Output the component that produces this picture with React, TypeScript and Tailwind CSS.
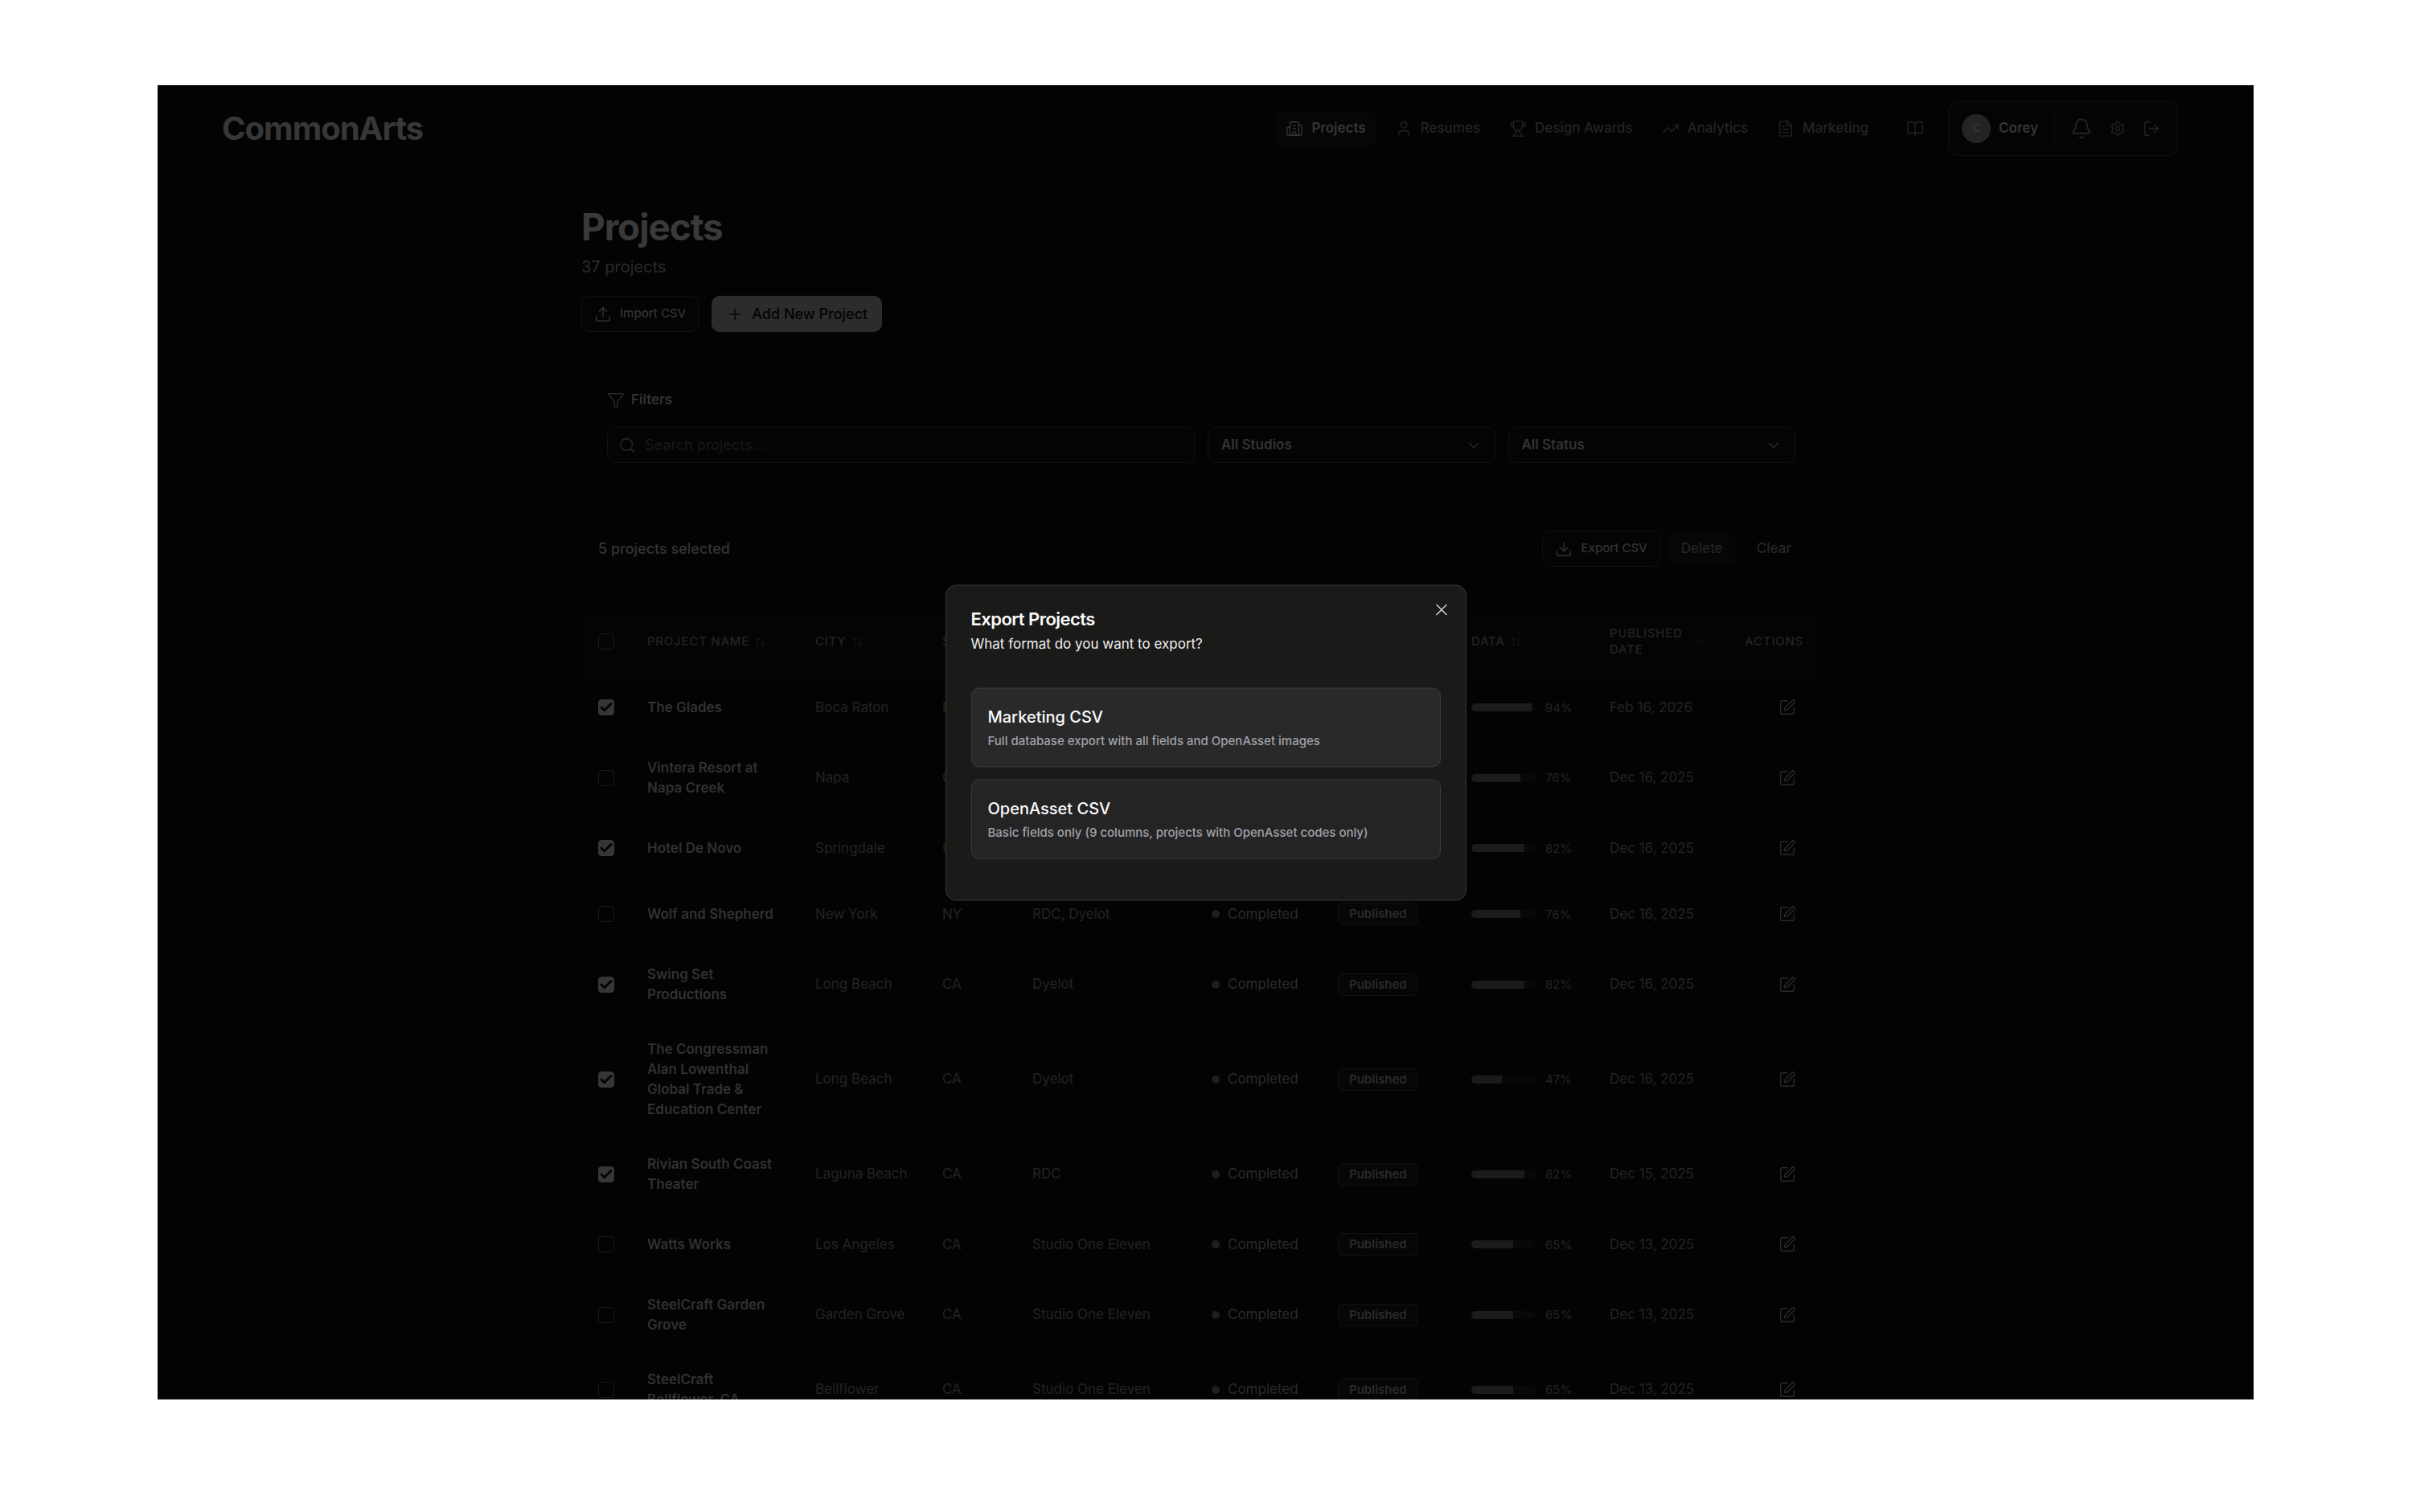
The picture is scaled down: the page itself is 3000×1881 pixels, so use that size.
import React, { useState } from "react";
import {
  ArrowUpDown,
  Bell,
  BookOpen,
  Building2,
  Check,
  ChevronDown,
  Download,
  FileText,
  Filter,
  LogOut,
  Plus,
  Search,
  Settings,
  SquarePen,
  TrendingUp,
  Trophy,
  Upload,
  User,
  X,
} from "lucide-react";

type Project = {
  name: string;
  city: string;
  state: string;
  studio: string;
  data: number;
  published: string;
  selected: boolean;
};

const initialProjects: Project[] = [
  { name: "The Glades", city: "Boca Raton", state: "FL", studio: "RDC", data: 94, published: "Feb 16, 2026", selected: true },
  { name: "Vintera Resort at Napa Creek", city: "Napa", state: "CA", studio: "RDC", data: 76, published: "Dec 16, 2025", selected: false },
  { name: "Hotel De Novo", city: "Springdale", state: "UT", studio: "RDC", data: 82, published: "Dec 16, 2025", selected: true },
  { name: "Wolf and Shepherd", city: "New York", state: "NY", studio: "RDC, Dyelot", data: 76, published: "Dec 16, 2025", selected: false },
  { name: "Swing Set Productions", city: "Long Beach", state: "CA", studio: "Dyelot", data: 82, published: "Dec 16, 2025", selected: true },
  { name: "The Congressman Alan Lowenthal Global Trade & Education Center", city: "Long Beach", state: "CA", studio: "Dyelot", data: 47, published: "Dec 16, 2025", selected: true },
  { name: "Rivian South Coast Theater", city: "Laguna Beach", state: "CA", studio: "RDC", data: 82, published: "Dec 15, 2025", selected: true },
  { name: "Watts Works", city: "Los Angeles", state: "CA", studio: "Studio One Eleven", data: 65, published: "Dec 13, 2025", selected: false },
  { name: "SteelCraft Garden Grove", city: "Garden Grove", state: "CA", studio: "Studio One Eleven", data: 65, published: "Dec 13, 2025", selected: false },
  { name: "SteelCraft Bellflower, CA", city: "Bellflower", state: "CA", studio: "Studio One Eleven", data: 65, published: "Dec 13, 2025", selected: false },
];

const navItems = [
  { label: "Projects", icon: Building2, active: true },
  { label: "Resumes", icon: User, active: false },
  { label: "Design Awards", icon: Trophy, active: false },
  { label: "Analytics", icon: TrendingUp, active: false },
  { label: "Marketing", icon: FileText, active: false },
];

const columns = ["Project Name", "City", "State", "Studio", "Status", "Publish", "Data"];

function Header() {
  return (
    <header className="flex items-center justify-between py-5 pr-[83px] pl-20">
      <a href="#" className="text-[40px] leading-[48px] font-bold tracking-tight text-[#373737]">
        CommonArts
      </a>
      <div className="flex items-center">
        <nav className="flex items-center gap-[10px]">
          {navItems.map(({ label, icon: Icon, active }) => (
            <a
              key={label}
              href="#"
              className={
                active
                  ? "flex h-[43px] items-center gap-[10px] rounded-lg bg-[#060606] px-[13px] font-semibold text-[#363636]"
                  : "flex h-[43px] items-center gap-[10px] rounded-lg px-[13px] font-medium text-[#242425]"
              }
            >
              <Icon size={22} strokeWidth={1.5} />
              {label}
            </a>
          ))}
          <a href="#" aria-label="Library" className="flex h-[43px] items-center px-6 text-[#242425]">
            <BookOpen size={22} strokeWidth={1.5} />
          </a>
        </nav>
        <div className="ml-[6px] flex h-[68px] items-center rounded-xl border border-[#0f0f0f] bg-[#040404] pr-[21px] pl-4">
          <div className="flex h-[46px] items-center gap-[10px] border-r border-[#0e0e0e] pr-5">
            <span className="flex size-9 items-center justify-center rounded-full bg-[#242424] text-[13px] font-medium text-[#3a3a3a]">
              C
            </span>
            <span className="font-semibold text-[#363636]">Corey</span>
          </div>
          <div className="flex items-center gap-[21px] pl-[19px] text-[#262627]">
            <button type="button" aria-label="Notifications">
              <Bell size={28} strokeWidth={1.5} />
            </button>
            <button type="button" aria-label="Settings">
              <Settings size={20} strokeWidth={1.5} />
            </button>
            <button type="button" aria-label="Log out">
              <LogOut size={22} strokeWidth={1.5} />
            </button>
          </div>
        </div>
      </div>
    </header>
  );
}

function Checkbox({ label, checked, onChange }: { label: string; checked: boolean; onChange: () => void }) {
  return (
    <span className="relative flex size-5">
      <input
        type="checkbox"
        aria-label={label}
        checked={checked}
        onChange={onChange}
        className="size-5 appearance-none rounded-[4px] border border-[#1a1a1a] checked:border-[#363636] checked:bg-[#363636]"
      />
      {checked && <Check size={18} strokeWidth={4} className="pointer-events-none absolute top-px left-px text-[#030303]" />}
    </span>
  );
}

function FilterSelect({ label }: { label: string }) {
  return (
    <div className="relative">
      <select
        aria-label={label}
        className="h-[45px] w-full appearance-none rounded-[10px] border border-[#111111] bg-[#040404] px-4 font-semibold text-[#333333]"
      >
        <option>{label}</option>
      </select>
      <ChevronDown size={22} strokeWidth={1.5} className="pointer-events-none absolute top-3 right-4 text-[#2a2a2b]" />
    </div>
  );
}

function Filters() {
  return (
    <section className="mt-[72px] px-8">
      <h2 className="flex items-center gap-2 leading-[25px] font-semibold text-[#333333]">
        <Filter size={22} strokeWidth={1.5} className="text-[#2a2a2b]" />
        Filters
      </h2>
      <div className="mt-[21px] grid grid-cols-4 gap-4">
        <div className="relative col-span-2">
          <Search size={22} strokeWidth={1.5} className="absolute top-3 left-[14px] text-[#2a2a2b]" />
          <input
            type="text"
            aria-label="Search projects"
            placeholder="Search projects..."
            className="h-[45px] w-full rounded-[10px] border border-[#111111] bg-[#040404] pl-[46px] text-[18px] placeholder:text-[#19191a]"
          />
        </div>
        <FilterSelect label="All Studios" />
        <FilterSelect label="All Status" />
      </div>
    </section>
  );
}

function ProjectsTable({ projects, onToggle }: { projects: Project[]; onToggle: (index: number) => void }) {
  return (
    <table className="mt-[59px] w-full table-fixed text-left">
      <colgroup>
        <col className="w-[62px]" />
        <col className="w-[209px]" />
        <col className="w-[158px]" />
        <col className="w-[112px]" />
        <col className="w-[223px]" />
        <col className="w-[157px]" />
        <col className="w-[166px]" />
        <col className="w-[172px]" />
        <col className="w-[168px]" />
        <col />
      </colgroup>
      <thead>
        <tr className="h-[75px] text-[15px] leading-5 text-[#232324] uppercase">
          <th className="rounded-tl-xl border-b border-[#090909] bg-[#040404] pb-[6px] pl-[21px]">
            <Checkbox label="Select all projects" checked={false} onChange={() => {}} />
          </th>
          {columns.map((column) => (
            <th key={column} className="border-b border-[#090909] bg-[#040404] px-5 pb-[6px] font-medium tracking-wider">
              <button type="button" className="flex items-center gap-[6px] uppercase">
                {column}
                <ArrowUpDown size={15} strokeWidth={1.5} className="text-[#1a1a1b]" />
              </button>
            </th>
          ))}
          <th className="border-b border-[#090909] bg-[#040404] px-5 pb-[6px] font-medium tracking-wider">
            <button type="button" className="flex items-center gap-4 text-left uppercase">
              <span>
                Published
                <br />
                Date
              </span>
              <ArrowUpDown size={11} strokeWidth={1.5} className="text-[#141415]" />
            </button>
          </th>
          <th className="rounded-tr-xl border-b border-[#090909] bg-[#040404] pr-[22px] pb-[6px] text-right font-medium tracking-wider">
            Actions
          </th>
        </tr>
      </thead>
      <tbody>
        {projects.map((project, index) => (
          <tr key={project.name} className="border-b border-[#040404] leading-[25px] text-[#232324]">
            <td className="pl-[21px]">
              <Checkbox label={`Select ${project.name}`} checked={project.selected} onChange={() => onToggle(index)} />
            </td>
            <td className="px-5 py-[21px] font-semibold text-[#313131]">{project.name}</td>
            <td className="px-5">{project.city}</td>
            <td className="px-5">{project.state}</td>
            <td className="px-5">{project.studio}</td>
            <td className="px-5 text-[#2a2a2b]">
              <span className="flex items-center gap-[10px]">
                <span className="size-[10px] rounded-full bg-[#1e1e1e]" />
                Completed
              </span>
            </td>
            <td className="px-5">
              <span className="inline-block rounded-md border border-[#111111] bg-[#060606] px-[13px] align-middle text-[15px] leading-[26px] font-semibold text-[#2a2a2b]">
                Published
              </span>
            </td>
            <td className="px-5">
              <div className="flex items-center gap-3">
                <div className="h-[10px] w-20 overflow-hidden rounded-full bg-[#080808]">
                  <div className="h-full bg-[#1b1b1a]" style={{ width: `${project.data}%` }} />
                </div>
                <span className="text-[15px]">{project.data}%</span>
              </div>
            </td>
            <td className="px-5">{project.published}</td>
            <td className="pr-[22px]">
              <button
                type="button"
                aria-label={`Edit ${project.name}`}
                className="my-[21px] ml-auto flex h-[39px] w-10 items-center justify-center text-[#2a2a2b]"
              >
                <SquarePen size={22} strokeWidth={1.5} />
              </button>
            </td>
          </tr>
        ))}
      </tbody>
    </table>
  );
}

function ExportDialog() {
  return (
    <div
      role="dialog"
      aria-labelledby="export-title"
      className="absolute top-1/2 left-1/2 w-[648px] -translate-x-1/2 -translate-y-1/2 rounded-[13px] border border-[#383837] bg-[#1a1a18] px-[31px] pt-[27px] pb-[51px] text-[#fafafa]"
    >
      <button type="button" aria-label="Close" className="absolute top-[18px] right-[18px] text-[#d4d4d8]">
        <X size={24} strokeWidth={1.5} />
      </button>
      <h2 id="export-title" className="text-[22px] leading-[28px] font-semibold tracking-tight">
        Export Projects
      </h2>
      <p className="mt-[5px] leading-[25px] text-[#f0f0f1]">What format do you want to export?</p>
      <div className="mt-[42px] flex flex-col gap-[15px]">
        <button type="button" className="rounded-[10px] border border-[#3c3c3c] bg-[#292929] px-5 pt-5 pb-[22px] text-left">
          <span className="block text-[20px] leading-[30px] font-medium">Marketing CSV</span>
          <span className="mt-1 block text-[15px] leading-[21px] font-medium text-[#a1a1aa]">
            Full database export with all fields and OpenAsset images
          </span>
        </button>
        <button type="button" className="rounded-[10px] border border-[#3c3c3c] bg-[#242424] px-5 pt-5 pb-[22px] text-left">
          <span className="block text-[20px] leading-[30px] font-medium">OpenAsset CSV</span>
          <span className="mt-1 block text-[15px] leading-[21px] font-medium text-[#a1a1aa]">
            Basic fields only (9 columns, projects with OpenAsset codes only)
          </span>
        </button>
      </div>
    </div>
  );
}

export default function App() {
  const [projects, setProjects] = useState(initialProjects);
  const selectedCount = projects.filter((project) => project.selected).length;

  const toggle = (index: number) => {
    setProjects((prev) => prev.map((p, i) => (i === index ? { ...p, selected: !p.selected } : p)));
  };

  return (
    <div className="flex h-screen bg-white pt-[106px] pr-[197px] pb-[140px] pl-[196px] font-['Inter',sans-serif] text-[17px]">
      <div className="relative flex-1 overflow-hidden bg-[#030303] pr-[11px]">
        <Header />

        <main className="mx-auto w-full max-w-[1542px] pt-[43px]">
          <h1 className="text-[46px] leading-[51px] font-bold tracking-tight text-[#393939]">Projects</h1>
          <p className="mt-3 text-[20px] leading-[25px] text-[#2a2a2b]">37 projects</p>
          <div className="mt-[23px] flex gap-4">
            <button
              type="button"
              className="flex h-[45px] items-center gap-[10px] rounded-[10px] border border-[#121212] bg-[#040404] px-[15px] text-[15px] font-medium text-[#333333]"
            >
              <Upload size={22} strokeWidth={1.5} />
              Import CSV
            </button>
            <button
              type="button"
              className="flex h-[45px] items-center gap-[10px] rounded-[10px] bg-[#2c2c2c] px-[18px] text-[18px] font-medium text-[#030303]"
            >
              <Plus size={22} strokeWidth={1.5} />
              Add New Project
            </button>
          </div>

          <Filters />

          <div className="mt-[84px] flex items-center justify-between px-[21px]">
            <p className="text-[18px] font-medium text-[#333333]">{selectedCount} projects selected</p>
            <div className="flex items-center gap-[11px]">
              <button
                type="button"
                className="flex h-[45px] items-center gap-[10px] rounded-[10px] border border-[#111111] bg-[#040404] px-[15px] text-[15px] font-medium text-[#333333]"
              >
                <Download size={22} strokeWidth={1.5} />
                Export CSV
              </button>
              <button type="button" className="h-[38px] rounded-lg bg-[#060606] px-[15px] font-medium text-[#242424]">
                Delete
              </button>
              <button type="button" className="h-[38px] px-4 font-medium text-[#262627]">
                Clear
              </button>
            </div>
          </div>

          <ProjectsTable projects={projects} onToggle={toggle} />
        </main>

        <ExportDialog />
      </div>
    </div>
  );
}
